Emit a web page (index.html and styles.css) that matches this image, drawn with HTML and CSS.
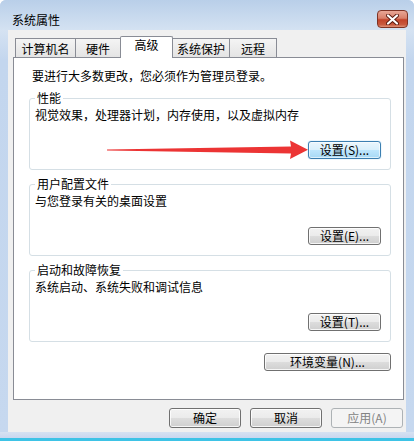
FILE: index.html
```html
<!DOCTYPE html>
<html lang="zh-CN">
<head>
<meta charset="utf-8">
<title>系统属性</title>
<link rel="stylesheet" href="styles.css">
</head>
<body>
<div class="window">
  <div class="titlebar">
    <span class="title">系统属性</span>
    <div class="close">
      <svg width="13" height="11" viewBox="0 0 13 11"><path d="M2 1.5 L11 9.5 M11 1.5 L2 9.5" stroke="#5a1a10" stroke-width="4" stroke-linecap="round"/><path d="M2 1.5 L11 9.5 M11 1.5 L2 9.5" stroke="#ffffff" stroke-width="2.2" stroke-linecap="round"/></svg>
    </div>
  </div>
  <div class="client">
    <div class="tabs">
      <div class="tab t1">计算机名</div>
      <div class="tab t2">硬件</div>
      <div class="tab sel">高级</div>
      <div class="tab t4">系统保护</div>
      <div class="tab t5">远程</div>
    </div>
    <div class="panel">
      <div class="intro">要进行大多数更改，您必须作为管理员登录。</div>
      <div class="group">
        <span class="glabel">性能</span>
        <div class="desc">视觉效果，处理器计划，内存使用，以及虚拟内存</div>
        <div class="btn focus inbtn">设置(S)...</div>
      </div>
      <div class="group">
        <span class="glabel">用户配置文件</span>
        <div class="desc">与您登录有关的桌面设置</div>
        <div class="btn inbtn">设置(E)...</div>
      </div>
      <div class="group">
        <span class="glabel">启动和故障恢复</span>
        <div class="desc">系统启动、系统失败和调试信息</div>
        <div class="btn inbtn">设置(T)...</div>
      </div>
      <div class="envrow">
        <div class="btn envbtn">环境变量(N)...</div>
      </div>
    </div>
    <div class="actions">
      <div class="btn act">确定</div>
      <div class="btn act">取消</div>
      <div class="btn act disabled">应用(A)</div>
    </div>
  </div>
  <div class="bottomframe"></div>
  <svg class="arrow" width="206" height="22" viewBox="0 0 206 22">
    <path d="M2 10.6 L186 7.5 L185 1.5 L203 10.8 L185 20 L186 14.5 L2 11.4 Z" fill="#ec3434"/>
  </svg>
</div>
</body>
</html>
```

FILE: styles.css
```css
html, body {
  margin: 0;
  padding: 0;
  background: #ffffff;
}
body {
  font-family: "Noto Sans CJK SC", "Noto Sans", sans-serif;
  font-size: 12px;
  color: #000;
}
.window {
  position: relative;
  width: 414px;
  height: 441px;
  display: flex;
  flex-direction: column;
  background: linear-gradient(#bdd1ea 0px, #d6e3f2 28px, #c3d6ee 60px, #c6d8ef 100%);
  border-radius: 6px 6px 0 0;
  overflow: hidden;
}
.titlebar {
  height: 30px;
  display: flex;
  align-items: flex-start;
  justify-content: space-between;
  background: linear-gradient(#b9cfe9, #d4e2f2);
}
.title {
  margin: 13px 0 0 12px;
  line-height: 14px;
  font-size: 12px;
}
.close {
  margin: 10px 6px 0 0;
  width: 29px;
  height: 16px;
  border: 1px solid #7e3325;
  border-radius: 4px;
  background: linear-gradient(#e8a796 0%, #d9806b 45%, #c2432a 55%, #c95a3f 85%, #e0937a 100%);
  display: flex;
  align-items: center;
  justify-content: center;
}
.client {
  height: 402px;
  margin: 0 8px;
  background: #f0f0f0;
  display: flex;
  flex-direction: column;
}
.tabs {
  display: flex;
  align-items: flex-end;
  height: 27px;
  padding-left: 7px;
  position: relative;
  z-index: 2;
}
.tab {
  box-sizing: border-box;
  height: 19px;
  border: 1px solid #898c95;
  border-bottom: none;
  background: linear-gradient(#f4f4f4, #e4e4e4);
  margin-left: -1px;
  text-align: center;
  line-height: 18px;
  padding-top: 1px;
}
.t1 { width: 61px; margin-left: 0; }
.t2 { width: 46px; }
.sel {
  width: 53px;
  height: 22px;
  background: #ffffff;
  margin-bottom: -1px;
  line-height: 14px;
  padding-top: 1px;
  border-radius: 2px 2px 0 0;
}
.t4 { width: 58px; }
.t5 { width: 48px; }
.panel {
  box-sizing: border-box;
  height: 343px;
  width: 391px;
  margin-left: 5px;
  border: 1px solid #898c95;
  background: #ffffff;
  display: flex;
  flex-direction: column;
  padding: 11px 12px 0 15px;
}
.intro {
  line-height: 14px;
  padding-left: 3px;
  margin-bottom: 15px;
}
.group {
  position: relative;
  box-sizing: border-box;
  height: 72px;
  border: 1px solid #d5dfe5;
  border-radius: 3px;
  padding: 9px 9px 10px 5px;
  display: flex;
  flex-direction: column;
  margin-bottom: 14px;
}
.glabel {
  position: absolute;
  left: 5px;
  top: -8px;
  line-height: 14px;
  padding: 0 2px;
  background: #ffffff;
}
.desc {
  line-height: 14px;
}
.btn {
  box-sizing: border-box;
  height: 18px;
  border: 1px solid #707070;
  border-radius: 3px;
  background: linear-gradient(#f2f2f2 0%, #ebebeb 49%, #dddddd 50%, #cfcfcf 100%);
  box-shadow: inset 0 0 0 1px rgba(255,255,255,0.8);
  text-align: center;
  line-height: 16px;
  font-size: 12px;
}
.inbtn {
  align-self: flex-end;
  margin-top: auto;
  width: 73px;
}
.focus {
  border-color: #3c7fb1;
  background: linear-gradient(#eaf6fd 0%, #d9f0fc 49%, #bee6fd 50%, #a7d9f5 100%);
  box-shadow: inset 0 0 0 1px rgba(255,255,255,0.6), 0 0 1px #5ab4e8;
}
.envrow {
  display: flex;
  justify-content: flex-end;
  margin-top: -3px;
}
.envbtn {
  width: 127px;
}
.actions {
  display: flex;
  justify-content: flex-end;
  gap: 9px;
  padding-right: 3px;
  margin-top: 8px;
}
.act {
  width: 72px;
  height: 20px;
  line-height: 18px;
}
.disabled {
  border-color: #adb2b5;
  background: #f4f4f4;
  color: #838383;
  box-shadow: none;
}
.bottomframe {
  flex: 1;
  background: linear-gradient(#d6e2f2, #c9d6ef 70%, #3ec3e6 71%, #3ec3e6 100%);
}
.arrow {
  position: absolute;
  left: 105px;
  top: 139px;
}
```
